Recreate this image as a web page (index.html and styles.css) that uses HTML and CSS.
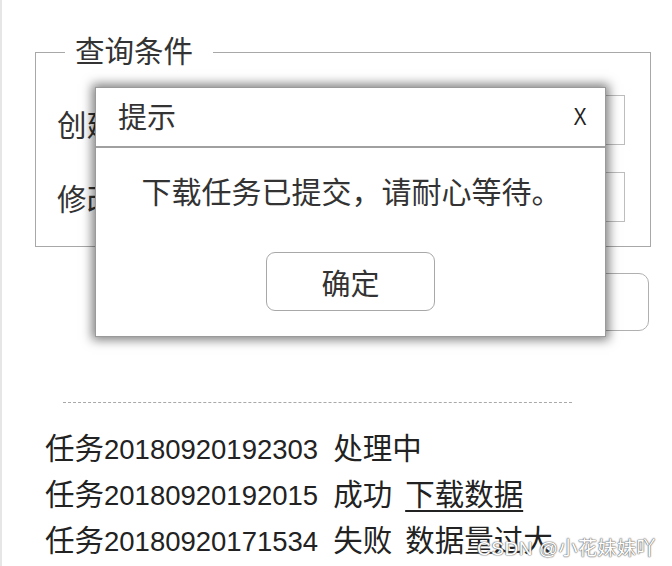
FILE: index.html
```html
<!DOCTYPE html>
<html lang="zh-CN">
<head>
    <meta charset="UTF-8">
    <title>下载任务</title>
    <link rel="stylesheet" href="styles.css">
</head>
<body>
    <div class="page">
        <fieldset class="query">
            <legend>查询条件</legend>
            <div class="row">
                <span class="label">创建时间</span>
                <div class="input"></div>
            </div>
            <div class="row">
                <span class="label">修改时间</span>
                <div class="input"></div>
            </div>
        </fieldset>

        <div class="actions">
            <button class="btn-query">查询</button>
        </div>

        <div class="divider"></div>

        <ul class="tasks">
            <li>任务<span class="id">20180920192303</span><span class="status">处理中</span></li>
            <li>任务<span class="id">20180920192015</span><span class="status">成功</span><a class="extra" href="#">下载数据</a></li>
            <li>任务<span class="id">20180920171534</span><span class="status">失败</span><span class="extra">数据量过大</span></li>
        </ul>

        <!-- popup over the query form -->
        <div class="dialog">
            <div class="dialog-head">
                <span class="dialog-title">提示</span>
                <span class="dialog-close">X</span>
            </div>
            <div class="dialog-body">
                <p class="dialog-msg">下载任务已提交，请耐心等待。</p>
                <button class="btn-ok">确定</button>
            </div>
        </div>

        <div class="watermark">CSDN @小花妹妹吖</div>
    </div>
</body>
</html>
```

FILE: styles.css
```css
* {
    margin: 0;
    padding: 0;
    box-sizing: border-box;
    font-family: 'Liberation Sans', 'Noto Sans CJK SC', sans-serif;
}

body {
    background: #fff;
    color: #2a2a2a;
}

.page {
    position: relative;
    width: 672px;
    height: 566px;
    border-left: 2px solid #e6e6e6;
    overflow: hidden;
}

.query {
    margin: 35px 0 0 33px;
    width: 616px;
    border: 1.5px solid #a8a8a8;
    padding: 0 25px 24px 21px;
}

.query legend {
    margin-left: 8px;
    padding: 0 20px 0 10px;
    font-size: 29.5px;
    line-height: 34px;
    color: #333;
}

.row {
    display: flex;
    align-items: center;
    height: 50px;
    margin-top: 26px;
}

.row + .row {
    margin-top: 27px;
}

.label {
    font-size: 29.5px;
    color: #333;
    width: 130px;
    padding-top: 6px;
}

.row + .row .label {
    padding-top: 0;
}

.input {
    flex: 1;
    height: 50px;
    border: 1.5px solid #bdbdbd;
}

.actions {
    display: flex;
    justify-content: flex-end;
    width: 647px;
    margin-top: 26px;
}

.btn-query {
    width: 200px;
    height: 58px;
    border: 1.5px solid #b0b0b0;
    border-radius: 10px;
    background: #fff;
    font-size: 28px;
    color: #333;
}

.divider {
    margin: 71px 0 0 61px;
    width: 509px;
    border-top: 1px dashed #a9a9a9;
}

.tasks {
    list-style: none;
    margin: 23px 0 0 43px;
}

.tasks li {
    font-size: 29.5px;
    line-height: 45px;
    color: #222;
    white-space: nowrap;
}

.tasks .id {
    font-size: 27.5px;
}

.tasks .status {
    margin-left: 15px;
}

.tasks .extra {
    margin-left: 13px;
}

.tasks a {
    color: #222;
    text-decoration: underline;
    text-underline-offset: 5px;
    text-decoration-thickness: 1.5px;
}

.dialog {
    position: absolute;
    left: 93px;
    top: 87px;
    width: 511px;
    height: 250px;
    background: #fff;
    border: 1px solid #9a9a9a;
    box-shadow: 0 0 10px 3px rgba(0, 0, 0, 0.5);
    display: flex;
    flex-direction: column;
}

.dialog-head {
    height: 60px;
    display: flex;
    align-items: center;
    justify-content: space-between;
    padding: 0 17px 0 22px;
    border-bottom: 2px solid #a0a0a0;
}

.dialog-title {
    font-size: 29px;
    color: #333;
    margin-top: -4px;
}

.dialog-close {
    font-size: 24px;
    line-height: 1;
    color: #222;
    transform: scaleX(0.82);
}

.dialog-body {
    display: flex;
    flex-direction: column;
    align-items: center;
    padding-top: 28px;
}

.dialog-msg {
    font-size: 30px;
    line-height: 34px;
    color: #333;
    margin-left: 2px;
}

.btn-ok {
    margin-top: 42px;
    width: 169px;
    height: 59px;
    border: 1.5px solid #a8a8a8;
    border-radius: 9px;
    background: #fff;
    font-size: 29px;
    color: #333;
}

.watermark {
    position: absolute;
    right: 16px;
    bottom: 6px;
    font-size: 19px;
    color: #fff;
    letter-spacing: 0.5px;
    text-shadow: 0 0 1px #666, 0 0 1px #666, 0 0 2px #888;
}
```
